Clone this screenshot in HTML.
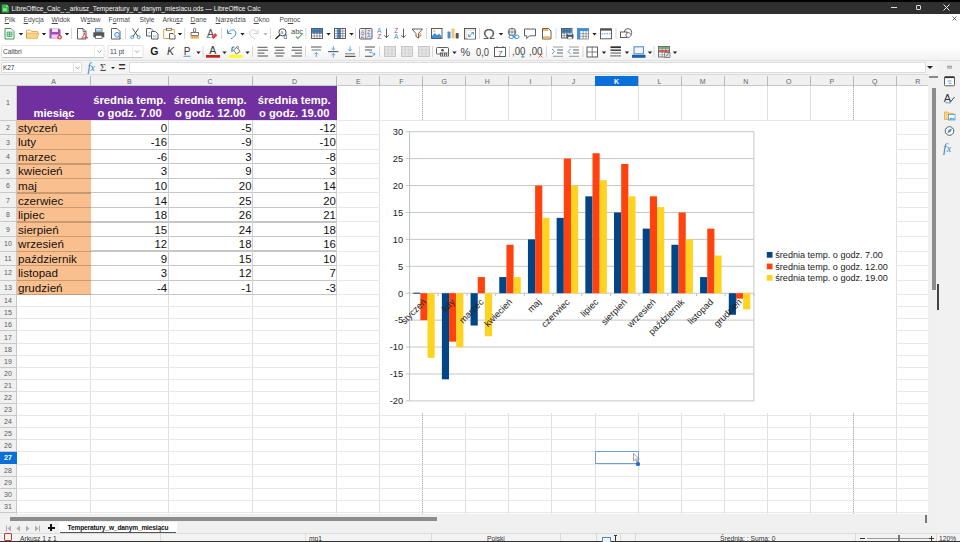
<!DOCTYPE html><html lang="pl"><head><meta charset="utf-8"><title>LibreOffice Calc</title><style>
*{box-sizing:border-box;margin:0;padding:0}
html,body{width:960px;height:542px;overflow:hidden;background:#fff}
body{position:relative;font-family:"Liberation Sans",sans-serif;color:#222}
.abs{position:absolute}
.ui{position:absolute;font-size:6.7px;line-height:8px;white-space:nowrap;color:#333}
.cell{position:absolute;font-size:11.4px;line-height:14px;white-space:nowrap;color:#111;transform-origin:left center;transform:scaleX(1.02)}
.num{position:absolute;font-size:11.4px;line-height:14px;white-space:nowrap;color:#111;text-align:right;transform-origin:right center;transform:scaleX(1)}
.hd{position:absolute;font-size:11.6px;line-height:14px;font-weight:bold;white-space:nowrap;color:#fff;text-align:center;transform:scaleX(.968)}
.ch{position:absolute;font-size:7px;line-height:9px;text-align:center;color:#636363}
.rh{position:absolute;font-size:7px;line-height:9px;text-align:center;color:#5a5a5a;left:0;width:16px}
.gl{position:absolute;background:#e8e8e8}.glv{position:absolute;background:#e1e1e1}
</style></head><body>
<div class="abs" style="left:0;top:0;width:960px;height:13.5px;background:#2f2f2f"></div>
<div class="abs" style="left:0;top:0;width:960px;height:2px;background:#000"></div>
<svg class="abs" style="left:1px;top:3.5px" width="9" height="9" viewBox="0 0 9 9"><path d="M.8.5h4.700l2.300 2.300v5.700h-7z" fill="#2fbf47"/><path d="M5.500.5v2.300h2.300z" fill="#a8ecb4"/><rect x="2" y="4.300" width="3.800" height="2.600" fill="#8fe29e"/></svg>
<div class="ui" style="left:11.6px;top:4.6px;color:#f4f4f4;font-size:6.6px">LibreOffice_Calc_-_arkusz_Temperatury_w_danym_miesiacu.ods — LibreOffice Calc</div>
<div class="abs" style="left:891px;top:7px;width:6px;height:1px;background:#ddd"></div>
<div class="abs" style="left:916px;top:5px;width:5px;height:5px;border:1px solid #ddd;border-radius:1px"></div>
<svg class="abs" style="left:943px;top:4px" width="7" height="7" viewBox="0 0 7 7"><path d="M.5.5l6 6M6.5.5l-6 6" stroke="#eee" stroke-width="1" fill="none"/></svg>
<div class="ui" style="left:4.6px;top:15.6px;color:#4a4a4a"><u>P</u>lik</div>
<div class="ui" style="left:23.6px;top:15.6px;color:#4a4a4a"><u>E</u>dycja</div>
<div class="ui" style="left:51.6px;top:15.6px;color:#4a4a4a"><u>W</u>idok</div>
<div class="ui" style="left:80.6px;top:15.6px;color:#4a4a4a">W<u>s</u>taw</div>
<div class="ui" style="left:108.6px;top:15.6px;color:#4a4a4a">F<u>o</u>rmat</div>
<div class="ui" style="left:139.6px;top:15.6px;color:#4a4a4a">Style</div>
<div class="ui" style="left:162.6px;top:15.6px;color:#4a4a4a">Arku<u>s</u>z</div>
<div class="ui" style="left:190.6px;top:15.6px;color:#4a4a4a"><u>D</u>ane</div>
<div class="ui" style="left:215.6px;top:15.6px;color:#4a4a4a"><u>N</u>arzędzia</div>
<div class="ui" style="left:253.6px;top:15.6px;color:#4a4a4a"><u>O</u>kno</div>
<div class="ui" style="left:279.6px;top:15.6px;color:#4a4a4a">Po<u>m</u>oc</div>
<svg class="abs" style="left:952px;top:16px" width="5" height="5" viewBox="0 0 5 5"><path d="M.5.5l4 4M4.5.5l-4 4" stroke="#444" stroke-width=".8" fill="none"/></svg>
<div class="abs" style="left:0;top:26px;width:960px;height:35px;background:linear-gradient(#fff 60%,#f1f1f1)"></div>
<div class="abs" style="left:0;top:60px;width:960px;height:1px;background:#e0e0e0"></div>
<svg class="abs" style="left:0;top:24px" width="960" height="38" viewBox="0 24 960 38" font-family="Liberation Sans, sans-serif">
<path d="M5 28.5h6l3 3v7.500h-9z" fill="#fff" stroke="#3a9b57" stroke-width="1"/><rect x="7" y="32" width="5" height="4.500" fill="#bfe5c8" stroke="#3a9b57" stroke-width=".7"/><path d="M7 34.200h5M9.500 32v4.500" stroke="#3a9b57" stroke-width=".6"/>
<path d="M18.8 33h4.4l-2.2 2.6z" fill="#222"/>
<path d="M26.500 30.200h4l1 1.300h6v2" fill="none" stroke="#e0a040" stroke-width=".9"/><path d="M26.500 38.300v-5.300h12.300l-1.600 5.300z" fill="#fbd387" stroke="#e9a840" stroke-width=".8"/><path d="M26.500 38.300v-8" stroke="#e0a040" stroke-width=".9"/>
<path d="M41.8 33h4.4l-2.2 2.6z" fill="#222"/>
<path d="M49.500 28.500h9.500l1.500 1.500v8.500h-11z" fill="#a44fb5"/><rect x="52" y="28.500" width="6" height="3.500" fill="#f3e3f6"/><rect x="51.500" y="34.500" width="7" height="4" fill="#e9d0ee"/><circle cx="59.600" cy="37.300" r="2.300" fill="#e0423f"/><path d="M58.400 37.300h2.400M59.600 36.100v2.400" stroke="#fff" stroke-width=".7"/>
<path d="M64.8 33h4.4l-2.2 2.6z" fill="#222"/>
<rect x="71.1" y="28" width=".8" height="11" fill="#cfcfcf"/>
<path d="M77.500 28.500h5.500l3 3v7.500h-8.500z" fill="#fff" stroke="#4d4d4d" stroke-width=".9"/><path d="M83 28.500v3h3" fill="none" stroke="#4d4d4d" stroke-width=".7"/><path d="M81.500 38.500c1.500-1.500 2.500-4 2.700-6c.2 2.500 1.800 4.500 3.600 5.300c-2-.4-4.400 0-6.300.7z" fill="none" stroke="#d9363a" stroke-width=".9"/>
<rect x="95.500" y="28.800" width="6.500" height="3.500" fill="#fff" stroke="#4d4d4d" stroke-width=".8"/><rect x="96" y="30.300" width="5.500" height="2" fill="#79b8ea"/><path d="M93.300 32.300h11v5h-11z" fill="#555"/><rect x="95.500" y="35.300" width="6.500" height="3.300" fill="#fff" stroke="#4d4d4d" stroke-width=".7"/>
<path d="M111.500 28.500h5.500l3 3v7.500h-8.500z" fill="#fff" stroke="#4d4d4d" stroke-width=".9"/><circle cx="117" cy="34.800" r="2.400" fill="#dcecf9" stroke="#3a8fd6" stroke-width=".9"/><path d="M118.800 36.800l2.200 2.200" stroke="#3a8fd6" stroke-width="1"/>
<rect x="125.1" y="28" width=".8" height="11" fill="#cfcfcf"/>
<path d="M132.500 28.500l5.500 8M138.500 28.500l-5.500 8" stroke="#4d4d4d" stroke-width="1" fill="none"/><circle cx="132.300" cy="37.200" r="1.500" fill="none" stroke="#3a8fd6" stroke-width=".9"/><circle cx="138.700" cy="37.200" r="1.500" fill="none" stroke="#3a8fd6" stroke-width=".9"/>
<path d="M146.500 28.500h4.500l2 2v5.500h-6.500z" fill="#fff" stroke="#4d4d4d" stroke-width=".9"/><path d="M151.500 31.500h4l2.500 2.500v5h-6.500z" fill="#fff" stroke="#4d4d4d" stroke-width=".9"/><rect x="153" y="35" width="3.500" height="2.500" fill="#b9d7f0"/><rect x="148" y="32" width="2.500" height="1.500" fill="#b9d7f0"/>
<path d="M168 29.500h-4.300v9h5.300" fill="none" stroke="#f0a030" stroke-width="1"/><path d="M171 29.500h3.300v4" fill="none" stroke="#f0a030" stroke-width="1"/><rect x="166.500" y="28.300" width="5" height="2" fill="#fff" stroke="#4d4d4d" stroke-width=".7"/><path d="M169.500 33.500h3.500l2 2v3.500h-5.500z" fill="#fff" stroke="#4d4d4d" stroke-width=".9"/>
<path d="M177.8 33h4.4l-2.2 2.6z" fill="#222"/>
<rect x="184.29999999999998" y="28" width=".8" height="11" fill="#cfcfcf"/>
<rect x="193.500" y="28.300" width="2.200" height="3.700" rx="1" fill="#fff" stroke="#4d4d4d" stroke-width=".8"/><path d="M191 32.500h7.500v3h-7.500z" fill="#fff" stroke="#4d4d4d" stroke-width=".8"/><path d="M190.500 35.800h8.500v2.700h-8.500z" fill="#f6b25a"/><path d="M192.500 36v2.500M194.700 36v2.500M196.800 36v2.500" stroke="#e08a20" stroke-width=".5"/>
<text x="207" y="37" font-size="10.500" fill="#4d4d4d">A</text><rect x="206.500" y="37.200" width="4" height=".8" fill="#3a8fd6"/><path d="M211.200 37l4-4 2.200 2.200-4 4z" fill="#e04848"/>
<rect x="221.1" y="28" width=".8" height="11" fill="#cfcfcf"/>
<path d="M227.500 29.500v4h4" fill="none" stroke="#3a8fd6" stroke-width="1"/><path d="M227.800 33.300c1.800-3.500 5.500-4.500 7.300-2.200c1.800 2.400.2 5.400-4.200 7.700" fill="none" stroke="#3a8fd6" stroke-width="1"/>
<path d="M240.3 33h4.4l-2.2 2.6z" fill="#222"/>
<path d="M258 29.500v4h-4" fill="none" stroke="#cfcfcf" stroke-width="1"/><path d="M257.700 33.300c-1.800-3.500-5.500-4.500-7.300-2.200c-1.800 2.400-.2 5.400 4.200 7.700" fill="none" stroke="#cfcfcf" stroke-width="1"/>
<path d="M263.3 33h4.4l-2.2 2.6z" fill="#b5b5b5"/>
<rect x="270.1" y="28" width=".8" height="11" fill="#cfcfcf"/>
<circle cx="282.500" cy="32.300" r="3.600" fill="#fff" stroke="#4d4d4d" stroke-width="1"/><path d="M279.800 35l-4.300 4" stroke="#222" stroke-width="1.300"/><text x="280.300" y="34" font-size="5.500" fill="#3a8fd6">a</text><text x="283.600" y="39" font-size="6.500" fill="#4d4d4d">d</text>
<text x="291" y="33.500" font-size="7.500" fill="#4d4d4d" textLength="12" lengthAdjust="spacingAndGlyphs">abc</text><path d="M296 36.500l2 2 4.500-5" fill="none" stroke="#3fae5a" stroke-width="1.100"/>
<rect x="305.6" y="28" width=".8" height="11" fill="#cfcfcf"/>
<rect x="311.5" y="28.5" width="11" height="10" fill="#fff" stroke="#4d4d4d" stroke-width=".9"/>
<rect x="311.9" y="28.9" width="10.2" height="4.2" fill="#3e8fdc"/>
<path d="M314.25 28.5v10" stroke="#4d4d4d" stroke-width=".5"/>
<path d="M317.00 28.5v10" stroke="#4d4d4d" stroke-width=".5"/>
<path d="M319.75 28.5v10" stroke="#4d4d4d" stroke-width=".5"/>
<path d="M311.5 31.00h11" stroke="#4d4d4d" stroke-width=".5"/>
<path d="M311.5 33.50h11" stroke="#4d4d4d" stroke-width=".5"/>
<path d="M311.5 36.00h11" stroke="#4d4d4d" stroke-width=".5"/>
<path d="M326.3 33h4.4l-2.2 2.6z" fill="#222"/>
<rect x="334.5" y="28.5" width="11" height="10" fill="#fff" stroke="#4d4d4d" stroke-width=".9"/>
<rect x="337.47" y="28.9" width="3.3" height="9.2" fill="#3e8fdc"/>
<path d="M337.25 28.5v10" stroke="#4d4d4d" stroke-width=".5"/>
<path d="M340.00 28.5v10" stroke="#4d4d4d" stroke-width=".5"/>
<path d="M342.75 28.5v10" stroke="#4d4d4d" stroke-width=".5"/>
<path d="M334.5 31.00h11" stroke="#4d4d4d" stroke-width=".5"/>
<path d="M334.5 33.50h11" stroke="#4d4d4d" stroke-width=".5"/>
<path d="M334.5 36.00h11" stroke="#4d4d4d" stroke-width=".5"/>
<path d="M349.3 33h4.4l-2.2 2.6z" fill="#222"/>
<rect x="355.1" y="28" width=".8" height="11" fill="#cfcfcf"/>
<rect x="359.500" y="28.500" width="12.500" height="10.500" rx="1" fill="#eee" stroke="#4d4d4d" stroke-width=".9"/><path d="M365.700 29v9.500" stroke="#4d4d4d" stroke-width=".6"/>
<text x="360.700" y="33.500" font-size="5.500" fill="#3a8fd6">A</text><text x="360.700" y="38.300" font-size="5.500" fill="#a64ca6">Z</text><text x="367" y="33.500" font-size="5.500" fill="#a64ca6">Z</text><text x="367" y="38.300" font-size="5.500" fill="#3a8fd6">A</text>
<text x="377" y="33.300" font-size="6.500" fill="#3a8fd6">A</text><text x="377.200" y="39" font-size="6.500" fill="#a64ca6">Z</text><path d="M386.500 28.500v9M384.300 35.300l2.200 2.400 2.200-2.400" fill="none" stroke="#4d4d4d" stroke-width=".9"/>
<text x="394.200" y="33.300" font-size="6.500" fill="#a64ca6">Z</text><text x="394" y="39" font-size="6.500" fill="#3a8fd6">A</text><path d="M403.500 28.500v9M401.300 35.300l2.200 2.400 2.200-2.400" fill="none" stroke="#4d4d4d" stroke-width=".9"/>
<path d="M412 29h10.500l-4 4.500v4.500l-2.500-1.500v-3z" fill="#fff" stroke="#4d4d4d" stroke-width=".9"/><path d="M420.500 33l-2.500 3h1.500l-1 2.800 3.500-4h-1.700l1.200-1.800z" fill="#f39a2b"/>
<rect x="426.1" y="28" width=".8" height="11" fill="#cfcfcf"/>
<rect x="431.500" y="28.500" width="10.500" height="10" fill="#fff" stroke="#4d4d4d" stroke-width=".9"/><path d="M432 38v-2l2.700-3 2.300 2.300 2-1.600 2.500 2.300v2z" fill="#3e8fdc"/><circle cx="434.300" cy="31" r="1" fill="#f6b25a"/>
<rect x="447.500" y="31.500" width="3" height="7" rx=".8" fill="#3e8fdc"/><rect x="451.500" y="28.500" width="3" height="10" rx=".8" fill="#f4c272"/><rect x="455.700" y="33" width="3" height="5.500" rx=".8" fill="#555"/>
<rect x="464.500" y="28.500" width="11" height="10.500" fill="#e8e8e8" stroke="#4d4d4d" stroke-width=".9"/><rect x="467.300" y="31" width="7.800" height="7.600" fill="#fff"/><path d="M468.500 36.500l5-4M473.500 32.500h-2.200M473.500 32.500v2.200M468.500 36.500h2.200M468.500 36.500v-2.200" stroke="#3a8fd6" stroke-width=".8" fill="none"/>
<rect x="479.1" y="28" width=".8" height="11" fill="#cfcfcf"/>
<text x="483" y="38.800" font-size="14.500" fill="#555" textLength="12" lengthAdjust="spacingAndGlyphs">Ω</text>
<path d="M498.8 33h4.4l-2.2 2.6z" fill="#222"/>
<circle cx="512" cy="32" r="3.800" fill="#fff" stroke="#4d4d4d" stroke-width=".8"/><path d="M508.200 32h7.600M512 28.200v7.600M510 28.800c-1 2-1 4.500 0 6.500M514 28.800c1 2 1 4.500 0 6.500" fill="none" stroke="#4d4d4d" stroke-width=".6"/><rect x="509" y="35.200" width="4.500" height="3.300" rx="1.600" fill="#fff" stroke="#3a8fd6" stroke-width="1"/><rect x="514.500" y="35.200" width="4.500" height="3.300" rx="1.600" fill="#fff" stroke="#3a8fd6" stroke-width="1"/><path d="M512.500 36.800h3" stroke="#3a8fd6" stroke-width="1"/>
<path d="M524.500 29h11v6.800h-6l-2.700 2.700v-2.700h-2.300z" fill="#fff" stroke="#4d4d4d" stroke-width=".9"/>
<path d="M542.500 28.500h6l2.500 2.500v8h-8.500z" fill="#fff" stroke="#4d4d4d" stroke-width=".9"/><rect x="543" y="29" width="5.300" height="2" fill="#f6b25a"/><rect x="543" y="36.300" width="7.500" height="2.200" fill="#f6b25a"/>
<rect x="555.6" y="28" width=".8" height="11" fill="#cfcfcf"/>
<rect x="561.5" y="28.5" width="10.5" height="9.5" fill="#fff" stroke="#4d4d4d" stroke-width=".9"/>
<rect x="561.9" y="28.9" width="9.7" height="3.9899999999999998" fill="#3e8fdc"/>
<path d="M564.12 28.5v9.5" stroke="#4d4d4d" stroke-width=".5"/>
<path d="M566.75 28.5v9.5" stroke="#4d4d4d" stroke-width=".5"/>
<path d="M569.38 28.5v9.5" stroke="#4d4d4d" stroke-width=".5"/>
<path d="M561.5 30.88h10.5" stroke="#4d4d4d" stroke-width=".5"/>
<path d="M561.5 33.25h10.5" stroke="#4d4d4d" stroke-width=".5"/>
<path d="M561.5 35.62h10.5" stroke="#4d4d4d" stroke-width=".5"/>
<rect x="566.500" y="34" width="7" height="4.500" rx="1" fill="#555"/><rect x="568" y="33" width="4" height="2" fill="#9ccaf0"/><rect x="568" y="36.800" width="4" height="2.200" fill="#fff" stroke="#4d4d4d" stroke-width=".4"/>
<rect x="577.500" y="28.500" width="11" height="10.500" fill="#fff" stroke="#4d4d4d" stroke-width=".6"/><rect x="577.300" y="28.300" width="11.400" height="2.800" fill="#3e8fdc"/><rect x="577.300" y="28.300" width="3" height="10.900" fill="#3e8fdc"/><path d="M580.300 33.700h8.200M580.300 36.300h8.200M583.200 31v8M586 31v8" stroke="#4d4d4d" stroke-width=".5"/>
<path d="M592.3 33h4.4l-2.2 2.6z" fill="#222"/>
<rect x="600.500" y="28.800" width="11" height="10" fill="#fff" stroke="#4d4d4d" stroke-width=".9"/><rect x="600.500" y="28.800" width="11" height="1.800" fill="#4d4d4d"/><path d="M601.500 33.800h9" stroke="#3a8fd6" stroke-width=".9" stroke-dasharray="1.500 1"/>
<rect x="615.6" y="28" width=".8" height="11" fill="#cfcfcf"/>
<circle cx="628" cy="32.300" r="3.700" fill="#fff" stroke="#4d4d4d" stroke-width=".9"/><rect x="620.500" y="32" width="6.500" height="5.500" fill="#fff" stroke="#4d4d4d" stroke-width=".9"/><path d="M628.500 32l3 3-3 3-3-3z" fill="#fff" stroke="#4d4d4d" stroke-width=".8"/>
<rect x="1.500" y="45.500" width="102.500" height="12" rx="1" fill="#fff" stroke="#e3e3e3" stroke-width="1"/><path d="M2 57.600h102" stroke="#bdbdbd" stroke-width=".8"/><path d="M94.500 46v11" stroke="#e6e6e6" stroke-width=".8"/>
<text x="3" y="54" font-size="6.600" fill="#444">Calibri</text>
<path d="M97.500 50.500l2 2 2-2" fill="none" stroke="#8a8a8a" stroke-width=".8"/>
<rect x="108" y="45.500" width="35" height="12" rx="1" fill="#fff" stroke="#e3e3e3" stroke-width="1"/><path d="M108.500 57.600h34" stroke="#bdbdbd" stroke-width=".8"/><path d="M132.500 46v11" stroke="#e6e6e6" stroke-width=".8"/>
<text x="110" y="54" font-size="6.600" fill="#444">11 pt</text>
<path d="M135 50.500l2 2 2-2" fill="none" stroke="#8a8a8a" stroke-width=".8"/>
<text x="150.300" y="55.300" font-size="10.500" font-weight="bold" fill="#222">G</text>
<text x="167" y="55.300" font-size="10.500" font-style="italic" fill="#333">K</text>
<text x="183.800" y="54.800" font-size="10" fill="#333">P</text><rect x="183.500" y="55.800" width="7" height=".9" fill="#3a8fd6"/>
<path d="M196.3 51.5h4.4l-2.2 2.6z" fill="#222"/>
<rect x="202.6" y="46" width=".8" height="11" fill="#cfcfcf"/>
<text x="209.300" y="54.300" font-size="10.500" fill="#333">A</text><rect x="206" y="55" width="14" height="2.700" fill="#c9211e"/>
<path d="M222.3 51.5h4.4l-2.2 2.6z" fill="#222"/>
<path d="M232 52v-3.500c0-1 .5-1.500 1.500-1.500h1" fill="none" stroke="#2a6fb5" stroke-width="1.200"/><path d="M233.500 50l3.500-3 3 4.500-3.500 2.500z" fill="#fff" stroke="#4d4d4d" stroke-width=".8"/><circle cx="237.500" cy="47.300" r="1" fill="#fff" stroke="#4d4d4d" stroke-width=".6"/><rect x="229" y="55" width="13.500" height="2.700" fill="#ffff00"/>
<path d="M245.3 51.5h4.4l-2.2 2.6z" fill="#222"/>
<rect x="252.1" y="46" width=".8" height="11" fill="#cfcfcf"/>
<rect x="257.50" y="46.8" width="10" height="1" fill="#555"/>
<rect x="257.50" y="49.7" width="10.5" height="1" fill="#555"/>
<rect x="257.50" y="52.6" width="7" height="1" fill="#555"/>
<rect x="257.50" y="55.5" width="10.5" height="1" fill="#555"/>
<rect x="274.25" y="46.8" width="10.5" height="1" fill="#555"/>
<rect x="275.50" y="49.7" width="8" height="1" fill="#555"/>
<rect x="274.25" y="52.6" width="10.5" height="1" fill="#555"/>
<rect x="275.75" y="55.5" width="7.5" height="1" fill="#555"/>
<rect x="292.00" y="46.8" width="10" height="1" fill="#555"/>
<rect x="291.50" y="49.7" width="10.5" height="1" fill="#555"/>
<rect x="295.00" y="52.6" width="7" height="1" fill="#555"/>
<rect x="291.50" y="55.5" width="10.5" height="1" fill="#555"/>
<rect x="305.1" y="46" width=".8" height="11" fill="#cfcfcf"/>
<rect x="311" y="46.500" width="10.500" height="1" fill="#555"/><rect x="311.500" y="49.500" width="9.500" height="1" fill="#777"/><path d="M316.300 57v-4.500M314.500 54.300l1.800-1.800 1.800 1.800" fill="none" stroke="#3a8fd6" stroke-width=".8"/>
<rect x="328" y="51" width="10.500" height="1.200" fill="#666"/><path d="M333.300 46v3.800M331.500 48.300l1.800 1.700 1.800-1.700M333.300 57.500v-3.800M331.500 55.200l1.800-1.700 1.800 1.700" fill="none" stroke="#3a8fd6" stroke-width=".8"/>
<rect x="345" y="53.300" width="10" height="1" fill="#777"/><rect x="345" y="55.800" width="10.500" height="1.200" fill="#555"/><path d="M350 46.300v4.700M348.200 49.300l1.800 1.800 1.800-1.800" fill="none" stroke="#3a8fd6" stroke-width=".8"/>
<rect x="359.1" y="46" width=".8" height="11" fill="#cfcfcf"/>
<rect x="365" y="46.500" width="10" height="1" fill="#555"/><rect x="365" y="49.500" width="7" height="1" fill="#555"/><rect x="365" y="55.800" width="7.500" height="1" fill="#555"/><path d="M369 52.300h3l2.500 2.500M374.700 52.800v2.200h-2.200" fill="none" stroke="#3a8fd6" stroke-width=".8"/>
<rect x="379.1" y="46" width=".8" height="11" fill="#cfcfcf"/>
<rect x="384.5" y="46.500" width="11" height="10" fill="#e3e3e3" stroke="#bdbdbd" stroke-width=".8"/><path d="M384.5 50h11M384.5 53.300h11M388.2 46.500v10M391.9 46.500v10" stroke="#c9c9c9" stroke-width=".5"/>
<rect x="401.5" y="46.500" width="11" height="10" fill="#e3e3e3" stroke="#bdbdbd" stroke-width=".8"/><path d="M401.5 50h11M401.5 53.300h11M405.2 46.500v10M408.9 46.500v10" stroke="#c9c9c9" stroke-width=".5"/>
<rect x="418.5" y="46.500" width="11" height="10" fill="#e3e3e3" stroke="#bdbdbd" stroke-width=".8"/><path d="M418.5 50h11M418.5 53.300h11M422.2 46.500v10M425.9 46.500v10" stroke="#c9c9c9" stroke-width=".5"/>
<rect x="432.1" y="46" width=".8" height="11" fill="#cfcfcf"/>
<rect x="436.500" y="47.500" width="12" height="6.500" rx="1" fill="#fff" stroke="#4d4d4d" stroke-width=".9"/><circle cx="442.500" cy="50.300" r="1.300" fill="#4d4d4d"/><rect x="440" y="52.500" width="9" height="4" fill="#666"/><path d="M441.500 56v-2M443.500 56v-3M445.500 56v-2.500M447.500 56v-3.500" stroke="#fff" stroke-width=".7"/>
<path d="M452.3 51.5h4.4l-2.2 2.6z" fill="#222"/>
<text x="460.500" y="55.500" font-size="11" fill="#444">%</text>
<text x="476" y="55.500" font-size="10.500" fill="#444" textLength="13" lengthAdjust="spacingAndGlyphs">0,0</text>
<rect x="494.500" y="47.500" width="11" height="9" fill="#fff" stroke="#4d4d4d" stroke-width=".9"/><path d="M497 46v2M503 46v2" stroke="#4d4d4d" stroke-width=".8"/><text x="498" y="55.500" font-size="7.500" font-style="italic" fill="#4d4d4d">7</text>
<rect x="509.1" y="46" width=".8" height="11" fill="#cfcfcf"/>
<text x="512" y="55" font-size="10.500" fill="#444" textLength="13.500" lengthAdjust="spacingAndGlyphs">,00</text><path d="M521 56.800h3.600M522.800 55v3" stroke="#3a8fd6" stroke-width=".8"/>
<text x="529" y="55" font-size="10.500" fill="#444" textLength="13.500" lengthAdjust="spacingAndGlyphs">,00</text><path d="M538.500 53.500l4 4M542.500 53.500l-4 4" stroke="#e04848" stroke-width=".9"/>
<rect x="546.1" y="46" width=".8" height="11" fill="#cfcfcf"/>
<rect x="553" y="46.500" width="10" height="1" fill="#999"/><rect x="557" y="49.500" width="6" height="1" fill="#666"/><rect x="557" y="52.500" width="6" height="1" fill="#666"/><rect x="553" y="55.800" width="10" height="1" fill="#999"/><path d="M552 49l2.500 2.500-2.500 2.500" fill="none" stroke="#3a8fd6" stroke-width=".9"/>
<rect x="569" y="46.500" width="10" height="1" fill="#999"/><rect x="573" y="49.500" width="6" height="1" fill="#666"/><rect x="573" y="52.500" width="6" height="1" fill="#666"/><rect x="569" y="55.800" width="10" height="1" fill="#999"/><path d="M570.500 49l-2.500 2.500 2.500 2.500" fill="none" stroke="#3a8fd6" stroke-width=".9"/>
<rect x="582.6" y="46" width=".8" height="11" fill="#cfcfcf"/>
<rect x="587" y="47" width="10.500" height="10" fill="#fff" stroke="#4d4d4d" stroke-width=".9"/><path d="M592.200 47v10M587 52h10.500" stroke="#4d4d4d" stroke-width=".7"/>
<path d="M601.8 51.5h4.4l-2.2 2.6z" fill="#222"/>
<rect x="610.500" y="46.300" width="10.500" height="1.800" fill="#333"/><rect x="610.500" y="49.500" width="10.500" height="1.400" fill="#333"/><rect x="610.500" y="52.500" width="10.500" height="1" fill="#555"/><path d="M610.500 55.800h10.500" stroke="#333" stroke-width="1.300" stroke-dasharray="1.200 .8"/>
<path d="M624.8 51.5h4.4l-2.2 2.6z" fill="#222"/>
<rect x="634" y="46.800" width="9.500" height="7" fill="#f4f4f4" stroke="#4a90d0" stroke-width="1.100"/><rect x="632" y="54.800" width="13.500" height="3" fill="#1f5fa8"/>
<path d="M647.8 51.5h4.4l-2.2 2.6z" fill="#222"/>
<rect x="653.6" y="46" width=".8" height="11" fill="#cfcfcf"/>
<rect x="658.500" y="46.500" width="11" height="10.500" fill="#fff" stroke="#4d4d4d" stroke-width=".8"/><rect x="659" y="47" width="10" height="2.300" fill="#6cc07a"/><rect x="659" y="49.800" width="10" height="2.300" fill="#e85b5b"/><path d="M662.200 47v10M665.800 47v10M659 52.500h10M659 54.800h10" stroke="#4d4d4d" stroke-width=".4"/><rect x="664.500" y="52.500" width="5.500" height="5" rx=".8" fill="#ddd" stroke="#4d4d4d" stroke-width=".6"/><path d="M666 56.500l2.500-3" stroke="#4d4d4d" stroke-width=".7"/>
<path d="M672.8 51.5h4.4l-2.2 2.6z" fill="#222"/>
</svg>
<div class="abs" style="left:0;top:61px;width:960px;height:13px;background:#f4f4f4"></div>
<div class="abs" style="left:1px;top:62px;width:81px;height:11px;background:#fff;border:1px solid #dcdcdc;border-radius:1px"></div>
<div class="ui" style="left:3px;top:64px;font-size:6.4px">K27</div>
<div class="abs" style="left:72.5px;top:63px;width:1px;height:9px;background:#e4e4e4"></div>
<svg class="abs" style="left:75px;top:66px" width="5" height="4" viewBox="0 0 5 4"><path d="M.5.8l2 2 2-2" stroke="#888" stroke-width=".8" fill="none"/></svg>
<div class="abs" style="left:87.5px;top:60.5px;font-size:11.5px;line-height:13px;font-family:'Liberation Serif',serif;font-style:italic;color:#2e7fc8;letter-spacing:-.3px">f<span style="font-size:9.5px">x</span></div>
<div class="abs" style="left:100px;top:61px;font-size:10.5px;line-height:13px;font-family:'Liberation Serif',serif;color:#444">Σ</div>
<div class="abs" style="left:111px;top:67px;width:0;height:0;border-left:2.2px solid transparent;border-right:2.2px solid transparent;border-top:2.6px solid #222"></div>
<div class="abs" style="left:118.5px;top:60.3px;font-size:12px;line-height:14px;font-weight:bold;color:#333">=</div>
<div class="abs" style="left:129px;top:62px;width:797px;height:11px;background:#fff;border:1px solid #dcdcdc"></div>
<div class="abs" style="left:927px;top:66px;width:0;height:0;border-left:3px solid transparent;border-right:3px solid transparent;border-top:3.5px solid #222"></div>
<div class="abs" style="left:0;top:74px;width:938px;height:440px;background:#fff"></div>
<div class="abs" style="left:0;top:74px;width:928px;height:11.5px;background:#f0f0f0;border-top:1px solid #dadada;border-bottom:1px solid #c8c8c8"></div>
<div class="abs" style="left:0;top:85.5px;width:16.6px;height:428.0px;background:#f0f0f0;border-right:1px solid #c8c8c8"></div>
<div class="glv" style="left:90.1px;top:85.5px;width:1px;height:428.0px"></div>
<div class="glv" style="left:167.5px;top:85.5px;width:1px;height:428.0px"></div>
<div class="glv" style="left:251.8px;top:85.5px;width:1px;height:428.0px"></div>
<div class="glv" style="left:336.2px;top:85.5px;width:1px;height:428.0px"></div>
<div class="glv" style="left:379.25px;top:85.5px;width:1px;height:428.0px"></div>
<div class="glv" style="left:422.3px;top:85.5px;width:1px;height:428.0px"></div>
<div class="glv" style="left:465.35px;top:85.5px;width:1px;height:428.0px"></div>
<div class="glv" style="left:508.4px;top:85.5px;width:1px;height:428.0px"></div>
<div class="glv" style="left:551.45px;top:85.5px;width:1px;height:428.0px"></div>
<div class="glv" style="left:594.5px;top:85.5px;width:1px;height:428.0px"></div>
<div class="glv" style="left:637.55px;top:85.5px;width:1px;height:428.0px"></div>
<div class="glv" style="left:680.6px;top:85.5px;width:1px;height:428.0px"></div>
<div class="glv" style="left:723.65px;top:85.5px;width:1px;height:428.0px"></div>
<div class="glv" style="left:766.7px;top:85.5px;width:1px;height:428.0px"></div>
<div class="glv" style="left:809.75px;top:85.5px;width:1px;height:428.0px"></div>
<div class="glv" style="left:852.8px;top:85.5px;width:1px;height:428.0px"></div>
<div class="glv" style="left:895.85px;top:85.5px;width:1px;height:428.0px"></div>
<div class="gl" style="left:16.6px;top:119.7px;width:911.4px;height:1px"></div>
<div class="gl" style="left:16.6px;top:134.24px;width:911.4px;height:1px"></div>
<div class="gl" style="left:16.6px;top:148.78px;width:911.4px;height:1px"></div>
<div class="gl" style="left:16.6px;top:163.32px;width:911.4px;height:1px"></div>
<div class="gl" style="left:16.6px;top:177.86px;width:911.4px;height:1px"></div>
<div class="gl" style="left:16.6px;top:192.4px;width:911.4px;height:1px"></div>
<div class="gl" style="left:16.6px;top:206.94px;width:911.4px;height:1px"></div>
<div class="gl" style="left:16.6px;top:221.48px;width:911.4px;height:1px"></div>
<div class="gl" style="left:16.6px;top:236.02px;width:911.4px;height:1px"></div>
<div class="gl" style="left:16.6px;top:250.56px;width:911.4px;height:1px"></div>
<div class="gl" style="left:16.6px;top:265.1px;width:911.4px;height:1px"></div>
<div class="gl" style="left:16.6px;top:279.64px;width:911.4px;height:1px"></div>
<div class="gl" style="left:16.6px;top:294.18px;width:911.4px;height:1px"></div>
<div class="gl" style="left:16.6px;top:306.27px;width:911.4px;height:1px"></div>
<div class="gl" style="left:16.6px;top:318.37px;width:911.4px;height:1px"></div>
<div class="gl" style="left:16.6px;top:330.46px;width:911.4px;height:1px"></div>
<div class="gl" style="left:16.6px;top:342.56px;width:911.4px;height:1px"></div>
<div class="gl" style="left:16.6px;top:354.65px;width:911.4px;height:1px"></div>
<div class="gl" style="left:16.6px;top:366.74px;width:911.4px;height:1px"></div>
<div class="gl" style="left:16.6px;top:378.84px;width:911.4px;height:1px"></div>
<div class="gl" style="left:16.6px;top:390.93px;width:911.4px;height:1px"></div>
<div class="gl" style="left:16.6px;top:403.03px;width:911.4px;height:1px"></div>
<div class="gl" style="left:16.6px;top:415.12px;width:911.4px;height:1px"></div>
<div class="gl" style="left:16.6px;top:427.21px;width:911.4px;height:1px"></div>
<div class="gl" style="left:16.6px;top:439.31px;width:911.4px;height:1px"></div>
<div class="gl" style="left:16.6px;top:451.4px;width:911.4px;height:1px"></div>
<div class="gl" style="left:16.6px;top:463.5px;width:911.4px;height:1px"></div>
<div class="gl" style="left:16.6px;top:475.59px;width:911.4px;height:1px"></div>
<div class="gl" style="left:16.6px;top:487.68px;width:911.4px;height:1px"></div>
<div class="gl" style="left:16.6px;top:499.78px;width:911.4px;height:1px"></div>
<div class="gl" style="left:16.6px;top:511.87px;width:911.4px;height:1px"></div>
<div class="abs" style="left:90.6px;top:134.14000000000001px;width:246.1px;height:1.2px;background:#c6c6c6"></div>
<div class="abs" style="left:90.6px;top:148.68px;width:246.1px;height:1.2px;background:#c6c6c6"></div>
<div class="abs" style="left:90.6px;top:163.22px;width:246.1px;height:1.2px;background:#c6c6c6"></div>
<div class="abs" style="left:90.6px;top:177.76000000000002px;width:246.1px;height:1.2px;background:#c6c6c6"></div>
<div class="abs" style="left:90.6px;top:192.3px;width:246.1px;height:1.2px;background:#c6c6c6"></div>
<div class="abs" style="left:90.6px;top:206.84px;width:246.1px;height:1.2px;background:#c6c6c6"></div>
<div class="abs" style="left:90.6px;top:221.38px;width:246.1px;height:1.2px;background:#c6c6c6"></div>
<div class="abs" style="left:90.6px;top:235.92000000000002px;width:246.1px;height:1.2px;background:#c6c6c6"></div>
<div class="abs" style="left:90.6px;top:250.46px;width:246.1px;height:1.2px;background:#c6c6c6"></div>
<div class="abs" style="left:90.6px;top:265.0px;width:246.1px;height:1.2px;background:#c6c6c6"></div>
<div class="abs" style="left:90.6px;top:279.53999999999996px;width:246.1px;height:1.2px;background:#c6c6c6"></div>
<div class="abs" style="left:90.6px;top:294.08px;width:246.1px;height:1.2px;background:#c6c6c6"></div>
<div class="abs" style="left:167.5px;top:120.2px;width:1px;height:174.48000000000002px;background:#d0d0d0"></div>
<div class="abs" style="left:251.8px;top:120.2px;width:1px;height:174.48000000000002px;background:#d0d0d0"></div>
<div class="abs" style="left:336.2px;top:120.2px;width:1px;height:174.48000000000002px;background:#d0d0d0"></div>
<div class="ch" style="left:16.6px;top:76.5px;width:74.0px">A</div>
<div class="abs" style="left:90.1px;top:76px;width:1px;height:9.5px;background:#b8b8b8"></div>
<div class="ch" style="left:90.6px;top:76.5px;width:77.4px">B</div>
<div class="abs" style="left:167.5px;top:76px;width:1px;height:9.5px;background:#b8b8b8"></div>
<div class="ch" style="left:168px;top:76.5px;width:84.30000000000001px">C</div>
<div class="abs" style="left:251.8px;top:76px;width:1px;height:9.5px;background:#b8b8b8"></div>
<div class="ch" style="left:252.3px;top:76.5px;width:84.39999999999998px">D</div>
<div class="abs" style="left:336.2px;top:76px;width:1px;height:9.5px;background:#b8b8b8"></div>
<div class="ch" style="left:336.7px;top:76.5px;width:43.05000000000001px">E</div>
<div class="abs" style="left:379.25px;top:76px;width:1px;height:9.5px;background:#b8b8b8"></div>
<div class="ch" style="left:379.75px;top:76.5px;width:43.05000000000001px">F</div>
<div class="abs" style="left:422.3px;top:76px;width:1px;height:9.5px;background:#b8b8b8"></div>
<div class="ch" style="left:422.8px;top:76.5px;width:43.05000000000001px">G</div>
<div class="abs" style="left:465.35px;top:76px;width:1px;height:9.5px;background:#b8b8b8"></div>
<div class="ch" style="left:465.85px;top:76.5px;width:43.049999999999955px">H</div>
<div class="abs" style="left:508.4px;top:76px;width:1px;height:9.5px;background:#b8b8b8"></div>
<div class="ch" style="left:508.9px;top:76.5px;width:43.05000000000007px">I</div>
<div class="abs" style="left:551.45px;top:76px;width:1px;height:9.5px;background:#b8b8b8"></div>
<div class="ch" style="left:551.95px;top:76.5px;width:43.049999999999955px">J</div>
<div class="abs" style="left:594.5px;top:76px;width:1px;height:9.5px;background:#b8b8b8"></div>
<div class="abs" style="left:595.0px;top:76px;width:43.049999999999955px;height:9.5px;background:#0a6fd8"></div>
<div class="ch" style="left:595.0px;top:76.5px;width:43.049999999999955px;color:#fff;font-weight:bold">K</div>
<div class="abs" style="left:637.55px;top:76px;width:1px;height:9.5px;background:#b8b8b8"></div>
<div class="ch" style="left:638.05px;top:76.5px;width:43.05000000000007px">L</div>
<div class="abs" style="left:680.6px;top:76px;width:1px;height:9.5px;background:#b8b8b8"></div>
<div class="ch" style="left:681.1px;top:76.5px;width:43.049999999999955px">M</div>
<div class="abs" style="left:723.65px;top:76px;width:1px;height:9.5px;background:#b8b8b8"></div>
<div class="ch" style="left:724.15px;top:76.5px;width:43.05000000000007px">N</div>
<div class="abs" style="left:766.7px;top:76px;width:1px;height:9.5px;background:#b8b8b8"></div>
<div class="ch" style="left:767.2px;top:76.5px;width:43.049999999999955px">O</div>
<div class="abs" style="left:809.75px;top:76px;width:1px;height:9.5px;background:#b8b8b8"></div>
<div class="ch" style="left:810.25px;top:76.5px;width:43.049999999999955px">P</div>
<div class="abs" style="left:852.8px;top:76px;width:1px;height:9.5px;background:#b8b8b8"></div>
<div class="ch" style="left:853.3px;top:76.5px;width:43.05000000000007px">Q</div>
<div class="abs" style="left:895.85px;top:76px;width:1px;height:9.5px;background:#b8b8b8"></div>
<div class="ch" style="left:896.35px;top:76.5px;width:43.049999999999955px">R</div>
<div class="abs" style="left:938.9px;top:76px;width:1px;height:9.5px;background:#b8b8b8"></div>
<div class="abs" style="left:0;top:119.7px;width:16.6px;height:1px;background:#c8c8c8"></div>
<div class="rh" style="top:98.35px">1</div>
<div class="abs" style="left:0;top:134.24px;width:16.6px;height:1px;background:#c8c8c8"></div>
<div class="rh" style="top:122.97px">2</div>
<div class="abs" style="left:0;top:148.78px;width:16.6px;height:1px;background:#c8c8c8"></div>
<div class="rh" style="top:137.51px">3</div>
<div class="abs" style="left:0;top:163.32px;width:16.6px;height:1px;background:#c8c8c8"></div>
<div class="rh" style="top:152.05px">4</div>
<div class="abs" style="left:0;top:177.86px;width:16.6px;height:1px;background:#c8c8c8"></div>
<div class="rh" style="top:166.59px">5</div>
<div class="abs" style="left:0;top:192.4px;width:16.6px;height:1px;background:#c8c8c8"></div>
<div class="rh" style="top:181.13px">6</div>
<div class="abs" style="left:0;top:206.94px;width:16.6px;height:1px;background:#c8c8c8"></div>
<div class="rh" style="top:195.67000000000002px">7</div>
<div class="abs" style="left:0;top:221.48px;width:16.6px;height:1px;background:#c8c8c8"></div>
<div class="rh" style="top:210.20999999999998px">8</div>
<div class="abs" style="left:0;top:236.02px;width:16.6px;height:1px;background:#c8c8c8"></div>
<div class="rh" style="top:224.75px">9</div>
<div class="abs" style="left:0;top:250.56px;width:16.6px;height:1px;background:#c8c8c8"></div>
<div class="rh" style="top:239.29000000000002px">10</div>
<div class="abs" style="left:0;top:265.1px;width:16.6px;height:1px;background:#c8c8c8"></div>
<div class="rh" style="top:253.83000000000004px">11</div>
<div class="abs" style="left:0;top:279.64px;width:16.6px;height:1px;background:#c8c8c8"></div>
<div class="rh" style="top:268.37px">12</div>
<div class="abs" style="left:0;top:294.18px;width:16.6px;height:1px;background:#c8c8c8"></div>
<div class="rh" style="top:282.90999999999997px">13</div>
<div class="abs" style="left:0;top:306.27px;width:16.6px;height:1px;background:#c8c8c8"></div>
<div class="rh" style="top:296.225px">14</div>
<div class="abs" style="left:0;top:318.37px;width:16.6px;height:1px;background:#c8c8c8"></div>
<div class="rh" style="top:308.32px">15</div>
<div class="abs" style="left:0;top:330.46px;width:16.6px;height:1px;background:#c8c8c8"></div>
<div class="rh" style="top:320.41499999999996px">16</div>
<div class="abs" style="left:0;top:342.56px;width:16.6px;height:1px;background:#c8c8c8"></div>
<div class="rh" style="top:332.51px">17</div>
<div class="abs" style="left:0;top:354.65px;width:16.6px;height:1px;background:#c8c8c8"></div>
<div class="rh" style="top:344.605px">18</div>
<div class="abs" style="left:0;top:366.74px;width:16.6px;height:1px;background:#c8c8c8"></div>
<div class="rh" style="top:356.695px">19</div>
<div class="abs" style="left:0;top:378.84px;width:16.6px;height:1px;background:#c8c8c8"></div>
<div class="rh" style="top:368.78999999999996px">20</div>
<div class="abs" style="left:0;top:390.93px;width:16.6px;height:1px;background:#c8c8c8"></div>
<div class="rh" style="top:380.885px">21</div>
<div class="abs" style="left:0;top:403.03px;width:16.6px;height:1px;background:#c8c8c8"></div>
<div class="rh" style="top:392.98px">22</div>
<div class="abs" style="left:0;top:415.12px;width:16.6px;height:1px;background:#c8c8c8"></div>
<div class="rh" style="top:405.075px">23</div>
<div class="abs" style="left:0;top:427.21px;width:16.6px;height:1px;background:#c8c8c8"></div>
<div class="rh" style="top:417.16499999999996px">24</div>
<div class="abs" style="left:0;top:439.31px;width:16.6px;height:1px;background:#c8c8c8"></div>
<div class="rh" style="top:429.26px">25</div>
<div class="abs" style="left:0;top:451.4px;width:16.6px;height:1px;background:#c8c8c8"></div>
<div class="rh" style="top:441.355px">26</div>
<div class="abs" style="left:0;top:451.9px;width:16.6px;height:12.100000000000023px;background:#0a6fd8"></div>
<div class="rh" style="top:453.45px;color:#fff;font-weight:bold">27</div>
<div class="abs" style="left:0;top:475.59px;width:16.6px;height:1px;background:#c8c8c8"></div>
<div class="rh" style="top:465.54499999999996px">28</div>
<div class="abs" style="left:0;top:487.68px;width:16.6px;height:1px;background:#c8c8c8"></div>
<div class="rh" style="top:477.635px">29</div>
<div class="abs" style="left:0;top:499.78px;width:16.6px;height:1px;background:#c8c8c8"></div>
<div class="rh" style="top:489.73px">30</div>
<div class="abs" style="left:0;top:511.87px;width:16.6px;height:1px;background:#c8c8c8"></div>
<div class="rh" style="top:501.825px">31</div>
<div class="abs" style="left:16.6px;top:85.5px;width:320.09999999999997px;height:34.7px;background:#7030a0"></div>
<div class="abs" style="left:16.6px;top:120.2px;width:74.0px;height:174.48000000000002px;background:#fabf8f"></div>
<div class="abs" style="left:16.6px;top:134.24px;width:74px;height:1.2px;background:#c99a72"></div>
<div class="abs" style="left:16.6px;top:148.78px;width:74px;height:1.2px;background:#c99a72"></div>
<div class="abs" style="left:16.6px;top:163.32px;width:74px;height:1.2px;background:#c99a72"></div>
<div class="abs" style="left:16.6px;top:177.86px;width:74px;height:1.2px;background:#c99a72"></div>
<div class="abs" style="left:16.6px;top:192.4px;width:74px;height:1.2px;background:#c99a72"></div>
<div class="abs" style="left:16.6px;top:206.94px;width:74px;height:1.2px;background:#c99a72"></div>
<div class="abs" style="left:16.6px;top:221.48px;width:74px;height:1.2px;background:#c99a72"></div>
<div class="abs" style="left:16.6px;top:236.02px;width:74px;height:1.2px;background:#c99a72"></div>
<div class="abs" style="left:16.6px;top:250.56px;width:74px;height:1.2px;background:#c99a72"></div>
<div class="abs" style="left:16.6px;top:265.1px;width:74px;height:1.2px;background:#c99a72"></div>
<div class="abs" style="left:16.6px;top:279.64px;width:74px;height:1.2px;background:#c99a72"></div>
<div class="abs" style="left:16.6px;top:294.18px;width:74px;height:1.2px;background:#c99a72"></div>
<div class="hd" style="left:16.6px;width:74px;top:105.6px">miesiąc</div>
<div class="hd" style="left:90.6px;width:77.4px;top:93.2px">średnia temp.</div>
<div class="hd" style="left:90.6px;width:77.4px;top:105.6px">o godz. 7.00</div>
<div class="hd" style="left:168px;width:84.30000000000001px;top:93.2px">średnia temp.</div>
<div class="hd" style="left:168px;width:84.30000000000001px;top:105.6px">o godz. 12.00</div>
<div class="hd" style="left:252.3px;width:84.39999999999998px;top:93.2px">średnia temp.</div>
<div class="hd" style="left:252.3px;width:84.39999999999998px;top:105.6px">o godz. 19.00</div>
<div class="cell" style="left:18px;top:120.85000000000001px">styczeń</div>
<div class="num" style="left:90.6px;width:76.60000000000001px;top:120.85000000000001px">0</div>
<div class="num" style="left:168px;width:83.50000000000001px;top:120.85000000000001px">-5</div>
<div class="num" style="left:252.3px;width:83.59999999999998px;top:120.85000000000001px">-12</div>
<div class="cell" style="left:18px;top:135.39000000000001px">luty</div>
<div class="num" style="left:90.6px;width:76.60000000000001px;top:135.39000000000001px">-16</div>
<div class="num" style="left:168px;width:83.50000000000001px;top:135.39000000000001px">-9</div>
<div class="num" style="left:252.3px;width:83.59999999999998px;top:135.39000000000001px">-10</div>
<div class="cell" style="left:18px;top:149.93px">marzec</div>
<div class="num" style="left:90.6px;width:76.60000000000001px;top:149.93px">-6</div>
<div class="num" style="left:168px;width:83.50000000000001px;top:149.93px">3</div>
<div class="num" style="left:252.3px;width:83.59999999999998px;top:149.93px">-8</div>
<div class="cell" style="left:18px;top:164.47px">kwiecień</div>
<div class="num" style="left:90.6px;width:76.60000000000001px;top:164.47px">3</div>
<div class="num" style="left:168px;width:83.50000000000001px;top:164.47px">9</div>
<div class="num" style="left:252.3px;width:83.59999999999998px;top:164.47px">3</div>
<div class="cell" style="left:18px;top:179.01000000000002px">maj</div>
<div class="num" style="left:90.6px;width:76.60000000000001px;top:179.01000000000002px">10</div>
<div class="num" style="left:168px;width:83.50000000000001px;top:179.01000000000002px">20</div>
<div class="num" style="left:252.3px;width:83.59999999999998px;top:179.01000000000002px">14</div>
<div class="cell" style="left:18px;top:193.55px">czerwiec</div>
<div class="num" style="left:90.6px;width:76.60000000000001px;top:193.55px">14</div>
<div class="num" style="left:168px;width:83.50000000000001px;top:193.55px">25</div>
<div class="num" style="left:252.3px;width:83.59999999999998px;top:193.55px">20</div>
<div class="cell" style="left:18px;top:208.09px">lipiec</div>
<div class="num" style="left:90.6px;width:76.60000000000001px;top:208.09px">18</div>
<div class="num" style="left:168px;width:83.50000000000001px;top:208.09px">26</div>
<div class="num" style="left:252.3px;width:83.59999999999998px;top:208.09px">21</div>
<div class="cell" style="left:18px;top:222.63px">sierpień</div>
<div class="num" style="left:90.6px;width:76.60000000000001px;top:222.63px">15</div>
<div class="num" style="left:168px;width:83.50000000000001px;top:222.63px">24</div>
<div class="num" style="left:252.3px;width:83.59999999999998px;top:222.63px">18</div>
<div class="cell" style="left:18px;top:237.17000000000002px">wrzesień</div>
<div class="num" style="left:90.6px;width:76.60000000000001px;top:237.17000000000002px">12</div>
<div class="num" style="left:168px;width:83.50000000000001px;top:237.17000000000002px">18</div>
<div class="num" style="left:252.3px;width:83.59999999999998px;top:237.17000000000002px">16</div>
<div class="cell" style="left:18px;top:251.71px">październik</div>
<div class="num" style="left:90.6px;width:76.60000000000001px;top:251.71px">9</div>
<div class="num" style="left:168px;width:83.50000000000001px;top:251.71px">15</div>
<div class="num" style="left:252.3px;width:83.59999999999998px;top:251.71px">10</div>
<div class="cell" style="left:18px;top:266.25px">listopad</div>
<div class="num" style="left:90.6px;width:76.60000000000001px;top:266.25px">3</div>
<div class="num" style="left:168px;width:83.50000000000001px;top:266.25px">12</div>
<div class="num" style="left:252.3px;width:83.59999999999998px;top:266.25px">7</div>
<div class="cell" style="left:18px;top:280.78999999999996px">grudzień</div>
<div class="num" style="left:90.6px;width:76.60000000000001px;top:280.78999999999996px">-4</div>
<div class="num" style="left:168px;width:83.50000000000001px;top:280.78999999999996px">-1</div>
<div class="num" style="left:252.3px;width:83.59999999999998px;top:280.78999999999996px">-3</div>
<div class="abs" style="left:422.3px;top:85.5px;width:0;height:428.0px;border-left:1px dotted #b4b4b4"></div>
<div class="abs" style="left:852.8px;top:85.5px;width:0;height:428.0px;border-left:1px dotted #b4b4b4"></div>
<div class="abs" style="left:594.5px;top:451.4px;width:44.049999999999955px;height:13.100000000000023px;border:1px solid #6f9fd6"></div>
<div class="abs" style="left:636.4499999999999px;top:462.4px;width:3.2px;height:3.2px;border-radius:50%;background:#1f6fd0"></div>
<svg class="abs" style="left:633px;top:453px" width="7" height="10" viewBox="0 0 7 10"><path d="M.5.5v7.5l2-1.8 1.4 3 1-.5-1.3-2.9h2.7z" fill="#fff" stroke="#666" stroke-width=".6"/></svg>
<div class="abs" style="left:380.2px;top:120.6px;width:515.5999999999999px;height:292.0px;background:#fff"></div>
<svg class="abs" style="left:380.2px;top:120.6px" width="515.5999999999999" height="292.0" viewBox="380.2 120.6 515.5999999999999 292.0" font-family="Liberation Sans, sans-serif">
<line x1="405.8" x2="754.1" y1="400.50" y2="400.50" stroke="#c6c6c6" stroke-width="1"/>
<text x="403.3" y="403.80" font-size="9.3" text-anchor="end" fill="#222">-20</text>
<line x1="405.8" x2="754.1" y1="373.58" y2="373.58" stroke="#c6c6c6" stroke-width="1"/>
<text x="403.3" y="376.88" font-size="9.3" text-anchor="end" fill="#222">-15</text>
<line x1="405.8" x2="754.1" y1="346.66" y2="346.66" stroke="#c6c6c6" stroke-width="1"/>
<text x="403.3" y="349.96" font-size="9.3" text-anchor="end" fill="#222">-10</text>
<line x1="405.8" x2="754.1" y1="319.74" y2="319.74" stroke="#c6c6c6" stroke-width="1"/>
<text x="403.3" y="323.04" font-size="9.3" text-anchor="end" fill="#222">-5</text>
<line x1="405.8" x2="754.1" y1="292.82" y2="292.82" stroke="#c6c6c6" stroke-width="1"/>
<text x="403.3" y="296.12" font-size="9.3" text-anchor="end" fill="#222">0</text>
<line x1="405.8" x2="754.1" y1="265.90" y2="265.90" stroke="#c6c6c6" stroke-width="1"/>
<text x="403.3" y="269.20" font-size="9.3" text-anchor="end" fill="#222">5</text>
<line x1="405.8" x2="754.1" y1="238.98" y2="238.98" stroke="#c6c6c6" stroke-width="1"/>
<text x="403.3" y="242.28" font-size="9.3" text-anchor="end" fill="#222">10</text>
<line x1="405.8" x2="754.1" y1="212.06" y2="212.06" stroke="#c6c6c6" stroke-width="1"/>
<text x="403.3" y="215.36" font-size="9.3" text-anchor="end" fill="#222">15</text>
<line x1="405.8" x2="754.1" y1="185.14" y2="185.14" stroke="#c6c6c6" stroke-width="1"/>
<text x="403.3" y="188.44" font-size="9.3" text-anchor="end" fill="#222">20</text>
<line x1="405.8" x2="754.1" y1="158.22" y2="158.22" stroke="#c6c6c6" stroke-width="1"/>
<text x="403.3" y="161.52" font-size="9.3" text-anchor="end" fill="#222">25</text>
<line x1="405.8" x2="754.1" y1="131.30" y2="131.30" stroke="#c6c6c6" stroke-width="1"/>
<text x="403.3" y="134.60" font-size="9.3" text-anchor="end" fill="#222">30</text>
<line x1="409.8" x2="409.8" y1="131.30" y2="400.50" stroke="#c0c0c0" stroke-width="1"/>
<line x1="754.1" x2="754.1" y1="131.30" y2="400.50" stroke="#c6c6c6" stroke-width="1"/>
<rect x="413.39" y="292.32" width="7.17" height="1" fill="#004586"/>
<rect x="420.56" y="292.82" width="7.17" height="26.92" fill="#ff420e"/>
<rect x="427.73" y="292.82" width="7.17" height="64.61" fill="#ffd320"/>
<rect x="442.08" y="292.82" width="7.17" height="86.14" fill="#004586"/>
<rect x="449.25" y="292.82" width="7.17" height="48.46" fill="#ff420e"/>
<rect x="456.42" y="292.82" width="7.17" height="53.84" fill="#ffd320"/>
<rect x="470.77" y="292.82" width="7.17" height="32.30" fill="#004586"/>
<rect x="477.94" y="276.67" width="7.17" height="16.15" fill="#ff420e"/>
<rect x="485.12" y="292.82" width="7.17" height="43.07" fill="#ffd320"/>
<rect x="499.46" y="276.67" width="7.17" height="16.15" fill="#004586"/>
<rect x="506.63" y="244.36" width="7.17" height="48.46" fill="#ff420e"/>
<rect x="513.81" y="276.67" width="7.17" height="16.15" fill="#ffd320"/>
<rect x="528.15" y="238.98" width="7.17" height="53.84" fill="#004586"/>
<rect x="535.33" y="185.14" width="7.17" height="107.68" fill="#ff420e"/>
<rect x="542.50" y="217.44" width="7.17" height="75.38" fill="#ffd320"/>
<rect x="556.84" y="217.44" width="7.17" height="75.38" fill="#004586"/>
<rect x="564.02" y="158.22" width="7.17" height="134.60" fill="#ff420e"/>
<rect x="571.19" y="185.14" width="7.17" height="107.68" fill="#ffd320"/>
<rect x="585.54" y="195.91" width="7.17" height="96.91" fill="#004586"/>
<rect x="592.71" y="152.84" width="7.17" height="139.98" fill="#ff420e"/>
<rect x="599.88" y="179.76" width="7.17" height="113.06" fill="#ffd320"/>
<rect x="614.23" y="212.06" width="7.17" height="80.76" fill="#004586"/>
<rect x="621.40" y="163.60" width="7.17" height="129.22" fill="#ff420e"/>
<rect x="628.57" y="195.91" width="7.17" height="96.91" fill="#ffd320"/>
<rect x="642.92" y="228.21" width="7.17" height="64.61" fill="#004586"/>
<rect x="650.09" y="195.91" width="7.17" height="96.91" fill="#ff420e"/>
<rect x="657.27" y="206.68" width="7.17" height="86.14" fill="#ffd320"/>
<rect x="671.61" y="244.36" width="7.17" height="48.46" fill="#004586"/>
<rect x="678.78" y="212.06" width="7.17" height="80.76" fill="#ff420e"/>
<rect x="685.96" y="238.98" width="7.17" height="53.84" fill="#ffd320"/>
<rect x="700.30" y="276.67" width="7.17" height="16.15" fill="#004586"/>
<rect x="707.48" y="228.21" width="7.17" height="64.61" fill="#ff420e"/>
<rect x="714.65" y="255.13" width="7.17" height="37.69" fill="#ffd320"/>
<rect x="728.99" y="292.82" width="7.17" height="21.54" fill="#004586"/>
<rect x="736.17" y="292.82" width="7.17" height="5.38" fill="#ff420e"/>
<rect x="743.34" y="292.82" width="7.17" height="16.15" fill="#ffd320"/>
<line x1="409.80" x2="409.80" y1="292.82" y2="295.82" stroke="#c0c0c0" stroke-width="1"/>
<line x1="438.49" x2="438.49" y1="292.82" y2="295.82" stroke="#c0c0c0" stroke-width="1"/>
<line x1="467.18" x2="467.18" y1="292.82" y2="295.82" stroke="#c0c0c0" stroke-width="1"/>
<line x1="495.88" x2="495.88" y1="292.82" y2="295.82" stroke="#c0c0c0" stroke-width="1"/>
<line x1="524.57" x2="524.57" y1="292.82" y2="295.82" stroke="#c0c0c0" stroke-width="1"/>
<line x1="553.26" x2="553.26" y1="292.82" y2="295.82" stroke="#c0c0c0" stroke-width="1"/>
<line x1="581.95" x2="581.95" y1="292.82" y2="295.82" stroke="#c0c0c0" stroke-width="1"/>
<line x1="610.64" x2="610.64" y1="292.82" y2="295.82" stroke="#c0c0c0" stroke-width="1"/>
<line x1="639.33" x2="639.33" y1="292.82" y2="295.82" stroke="#c0c0c0" stroke-width="1"/>
<line x1="668.03" x2="668.03" y1="292.82" y2="295.82" stroke="#c0c0c0" stroke-width="1"/>
<line x1="696.72" x2="696.72" y1="292.82" y2="295.82" stroke="#c0c0c0" stroke-width="1"/>
<line x1="725.41" x2="725.41" y1="292.82" y2="295.82" stroke="#c0c0c0" stroke-width="1"/>
<line x1="754.10" x2="754.10" y1="292.82" y2="295.82" stroke="#c0c0c0" stroke-width="1"/>
<text transform="translate(427.05,302.22) rotate(-45)" font-size="9.2" text-anchor="end" fill="#222">styczeń</text>
<text transform="translate(455.74,302.22) rotate(-45)" font-size="9.2" text-anchor="end" fill="#222">luty</text>
<text transform="translate(484.43,302.22) rotate(-45)" font-size="9.2" text-anchor="end" fill="#222">marzec</text>
<text transform="translate(513.12,302.22) rotate(-45)" font-size="9.2" text-anchor="end" fill="#222">kwiecień</text>
<text transform="translate(541.81,302.22) rotate(-45)" font-size="9.2" text-anchor="end" fill="#222">maj</text>
<text transform="translate(570.50,302.22) rotate(-45)" font-size="9.2" text-anchor="end" fill="#222">czerwiec</text>
<text transform="translate(599.20,302.22) rotate(-45)" font-size="9.2" text-anchor="end" fill="#222">lipiec</text>
<text transform="translate(627.89,302.22) rotate(-45)" font-size="9.2" text-anchor="end" fill="#222">sierpień</text>
<text transform="translate(656.58,302.22) rotate(-45)" font-size="9.2" text-anchor="end" fill="#222">wrzesień</text>
<text transform="translate(685.27,302.22) rotate(-45)" font-size="9.2" text-anchor="end" fill="#222">październik</text>
<text transform="translate(713.96,302.22) rotate(-45)" font-size="9.2" text-anchor="end" fill="#222">listopad</text>
<text transform="translate(742.65,302.22) rotate(-45)" font-size="9.2" text-anchor="end" fill="#222">grudzień</text>
<rect x="767" y="251.6" width="5.7" height="5.7" fill="#004586"/>
<text x="775.5" y="257.7" font-size="9.1" fill="#222">średnia temp. o godz. 7.00</text>
<rect x="767" y="263.2" width="5.7" height="5.7" fill="#ff420e"/>
<text x="775.5" y="269.3" font-size="9.1" fill="#222">średnia temp. o godz. 12.00</text>
<rect x="767" y="274.59999999999997" width="5.7" height="5.7" fill="#ffd320"/>
<text x="775.5" y="280.7" font-size="9.1" fill="#222">średnia temp. o godz. 19.00</text>
</svg>
<div class="abs" style="left:928px;top:74px;width:10px;height:440px;background:#f0f0f0"></div>
<div class="abs" style="left:928.5px;top:76.3px;width:9px;height:1.8px;background:#8a8a8a"></div>
<div class="abs" style="left:931.5px;top:88px;width:4px;height:202px;background:#8c8c8c"></div>
<div class="abs" style="left:937.5px;top:61px;width:1px;height:472px;background:#d0d0d0"></div>
<div class="abs" style="left:938px;top:61px;width:22px;height:472px;background:#f1f1f1"></div>
<div class="abs" style="left:937px;top:284px;width:2px;height:26px;background:#444"></div>
<svg class="abs" style="left:938px;top:61px" width="22" height="80" viewBox="938 61 22 80" font-family="Liberation Sans, sans-serif">
<path d="M947 66.300h5M947 68h5" stroke="#666" stroke-width=".7"/>
<rect x="944.500" y="76.800" width="10" height="9" rx="1" fill="#fff" stroke="#4d4d4d" stroke-width=".9"/><rect x="944.500" y="76.500" width="10" height="1.600" fill="#333"/><path d="M947.500 81h4M948.500 83.300h3" stroke="#3a8fd6" stroke-width=".8"/>
<text x="943.800" y="102" font-size="11" fill="#333">A</text><path d="M950 102.500l4.500-5.500" stroke="#4d4d4d" stroke-width="1"/><path d="M948.500 103.500l2-.3-.3-1.700z" fill="#3a8fd6"/><rect x="945.500" y="102.300" width="3" height=".9" fill="#3a8fd6"/>
<path d="M944.500 112v7.500h9v-6h-4.500l-1-1.500z" fill="#fbd387" stroke="#e9a840" stroke-width=".8"/><rect x="948.500" y="114.500" width="6.500" height="5.500" fill="#fff" stroke="#3a8fd6" stroke-width=".7"/><path d="M949 119.500l1.800-2 1.400 1.200 1.200-1 1.200 1.800z" fill="#3a8fd6"/>
<circle cx="949.500" cy="131" r="4.300" fill="#fff" stroke="#4d4d4d" stroke-width=".9"/><path d="M947.300 133.200l1.400-3.400 3.400-1.400-1.400 3.400z" fill="#3a8fd6"/>
</svg>
<div class="abs" style="left:943px;top:140.5px;font-family:'Liberation Serif',serif;font-style:italic;font-size:13px;line-height:14px;color:#3a7fc4">f<span style="font-size:10px">x</span></div>
<div class="abs" style="left:0;top:513.5px;width:938px;height:19.5px;background:#f0f0f0"></div>
<div class="abs" style="left:10px;top:516.5px;width:427px;height:4px;background:#8c8c8c"></div>
<div class="abs" style="left:925px;top:514.5px;width:2px;height:8px;background:#777"></div>
<svg class="abs" style="left:3.5px;top:523.5px" width="40" height="9" viewBox="0 0 40 9"><g fill="#b0b0b0"><rect x="2" y="1.5" width="1" height="6"/><path d="M7 1.5v6l-3.5-3z"/><path d="M16 1.5v6l-3.5-3z"/><path d="M22 1.5v6l3.5-3z"/><path d="M31 1.5v6l3.5-3z"/><rect x="35" y="1.500" width="1" height="6"/></g></svg>
<div class="abs" style="left:47.5px;top:526.5px;width:7px;height:2px;background:#111"></div><div class="abs" style="left:50px;top:524px;width:2px;height:7px;background:#111"></div>
<div class="abs" style="left:59px;top:522px;width:118px;height:10.5px;background:#fff"></div>
<div class="abs" style="left:60px;top:531.5px;width:116px;height:1px;background:#555"></div>
<div class="ui" style="left:59px;width:118px;text-align:center;top:524.2px;font-weight:bold;color:#111;font-size:6.6px;letter-spacing:-.15px">Temperatury_w_danym_miesiącu</div>
<div class="abs" style="left:0;top:533px;width:960px;height:9px;background:#f3f3f3;border-top:1px solid #dcdcdc"></div>
<div class="abs" style="left:0;top:541px;width:960px;height:1px;background:#333"></div>
<div class="abs" style="left:4px;top:533px;width:8px;height:8px;border:1px solid #c0392b;border-radius:1px"></div>
<div class="abs" style="left:159.5px;top:534px;width:1px;height:7px;background:#dadada"></div>
<div class="abs" style="left:304.5px;top:534px;width:1px;height:7px;background:#dadada"></div>
<div class="abs" style="left:430.5px;top:534px;width:1px;height:7px;background:#dadada"></div>
<div class="abs" style="left:559.5px;top:534px;width:1px;height:7px;background:#dadada"></div>
<div class="abs" style="left:596.0px;top:534px;width:1px;height:7px;background:#dadada"></div>
<div class="abs" style="left:620.0px;top:534px;width:1px;height:7px;background:#dadada"></div>
<div class="abs" style="left:635.0px;top:534px;width:1px;height:7px;background:#dadada"></div>
<div class="abs" style="left:854.5px;top:534px;width:1px;height:7px;background:#dadada"></div>
<div class="abs" style="left:935.5px;top:534px;width:1px;height:7px;background:#dadada"></div>
<div class="ui" style="left:20px;top:535.2px">Arkusz 1 z 1</div>
<div class="ui" style="left:309px;top:535.2px">mp1</div>
<div class="ui" style="left:487px;top:535.2px">Polski</div>
<div class="abs" style="left:601.5px;top:536.5px;width:9.5px;height:6px;border:1px solid #4a8fcf;background:#eef5fc"></div>
<div class="abs" style="left:615px;top:534.5px;width:1px;height:7px;background:#333"></div><div class="abs" style="left:614px;top:534.5px;width:3px;height:1px;background:#333"></div>
<div class="ui" style="left:720px;top:535.2px">Średnia: ; Suma: 0</div>
<div class="abs" style="left:860px;top:537.5px;width:5px;height:1px;background:#333"></div>
<div class="abs" style="left:867px;top:538px;width:62px;height:1px;background:#999"></div>
<div class="abs" style="left:897.5px;top:535px;width:2px;height:6px;background:#777"></div>
<div class="abs" style="left:929px;top:537.5px;width:5px;height:1px;background:#333"></div><div class="abs" style="left:931px;top:535.5px;width:1px;height:5px;background:#333"></div>
<div class="ui" style="left:939px;top:535.2px">120%</div>
</body></html>
